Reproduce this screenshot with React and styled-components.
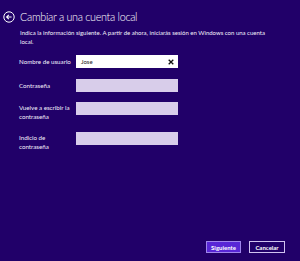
import styled, { createGlobalStyle } from "styled-components";

const Global = createGlobalStyle`
  html, body {
    margin: 0;
    padding: 0;
    background: #210069;
  }
  body {
    font-family: Lato, "Open Sans", sans-serif;
  }
`;

const Page = styled.div`
  width: 300px;
  height: 261px;
  background: #210069;
  color: #ffffff;
  display: flex;
  flex-direction: column;
  box-sizing: border-box;
  padding: 9px 15px 8px 3px;
  overflow: hidden;
`;

const Header = styled.div`
  display: flex;
  align-items: center;
  gap: 5px;
`;

const BackButton = styled.svg`
  width: 12px;
  height: 12px;
  flex-shrink: 0;
`;

const Title = styled.h1`
  margin: 0;
  font-family: Lato, sans-serif;
  font-weight: 300;
  font-size: 10.8px;
  letter-spacing: -0.3px;
  line-height: 16px;
`;

const Intro = styled.p`
  margin: 3px 0 0 17px;
  font-size: 6px;
  line-height: 9px;
  width: 252px;
  color: #f4f0fb;
`;

const Form = styled.div`
  display: grid;
  grid-template-columns: 57px 102px;
  margin: 9px 0 0 16px;
  row-gap: 10.5px;
`;

const Label = styled.label`
  font-size: 6.2px;
  line-height: 9px;
  padding-top: ${(p) => p.$top || 2}px;
  color: #f4f0fb;
`;

const Field = styled.div`
  height: 13px;
  box-sizing: border-box;
  background: ${(p) => (p.$active ? "#ffffff" : "#d8cdea")};
  border: 1px solid ${(p) => (p.$active ? "#ffffff" : "#d8cdea")};
  display: flex;
  align-items: center;
  justify-content: space-between;
  padding: 0 3px 0 4px;
  color: #222;
  font-size: 6px;
  margin-bottom: ${(p) => p.$gap || 0}px;
`;

const Spacer = styled.div`
  flex: 1;
`;

const Footer = styled.div`
  display: flex;
  justify-content: flex-end;
  gap: 8px;
`;

const Button = styled.button`
  height: 12px;
  width: ${(p) => p.$w}px;
  box-sizing: border-box;
  padding: 0;
  font-family: Lato, sans-serif;
  font-size: 6px;
  font-weight: 700;
  color: #ffffff;
  background: ${(p) => (p.$primary ? "#5826d6" : "#210069")};
  border: 1px solid ${(p) => (p.$primary ? "#9f85ec" : "#cfc2f0")};
`;

const Clear = () => (
  <svg width="6" height="6" viewBox="0 0 6 6">
    <path d="M0.7 0.7 L5.3 5.3 M5.3 0.7 L0.7 5.3" stroke="#111" strokeWidth="1.3" />
  </svg>
);

export default function App() {
  return (
    <Page>
      <Global />
      <Header>
        <BackButton viewBox="0 0 12 12">
          <circle cx="6" cy="6" r="5.2" fill="none" stroke="#fff" strokeWidth="1" />
          <path d="M8.6 6 H3.6 M5.8 3.8 L3.6 6 L5.8 8.2" fill="none" stroke="#fff" strokeWidth="1.1" />
        </BackButton>
        <Title>Cambiar a una cuenta local</Title>
      </Header>
      <Intro>
        Indica la información siguiente. A partir de ahora, iniciarás sesión en Windows con una cuenta
        local.
      </Intro>
      <Form>
        <Label>Nombre de usuario</Label>
        <Field $active>
          <span>Jose</span>
          <Clear />
        </Field>
        <Label>Contraseña</Label>
        <Field />
        <Label $top={1}>Vuelve a escribir la contraseña</Label>
        <Field $gap={6} />
        <Label $top={1}>Indicio de contraseña</Label>
        <Field />
      </Form>
      <Spacer />
      <Footer>
        <Button $primary $w={35}>Siguiente</Button>
        <Button $w={36}>Cancelar</Button>
      </Footer>
    </Page>
  );
}
